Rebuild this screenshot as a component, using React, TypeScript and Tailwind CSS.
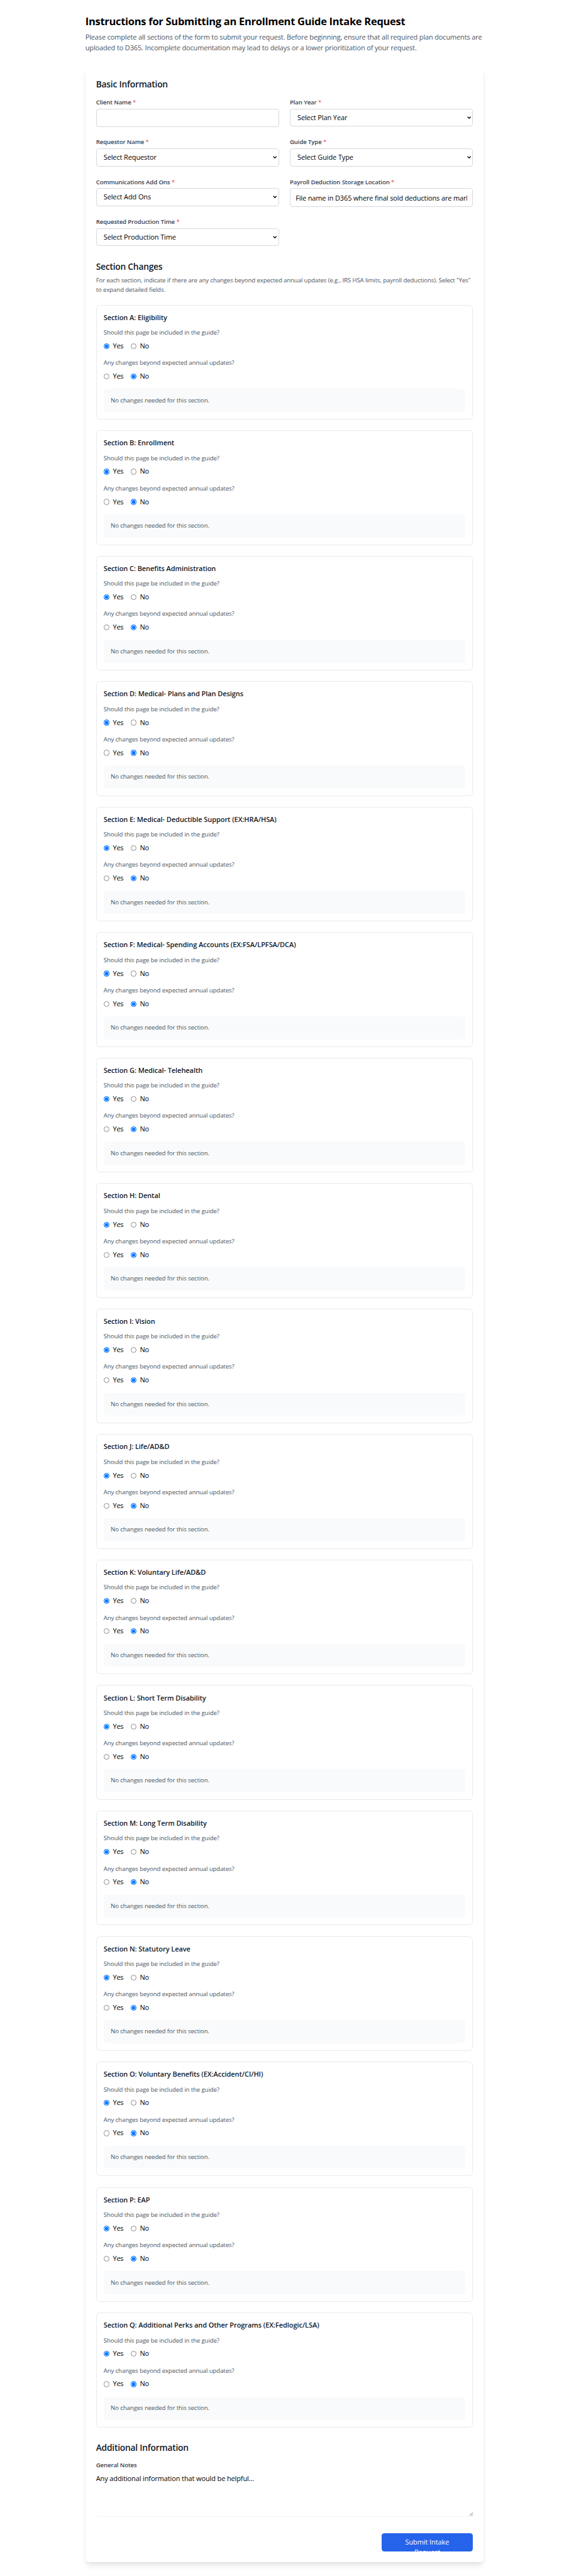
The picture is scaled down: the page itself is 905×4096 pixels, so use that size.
import type { ReactNode } from 'react';

const sections = [
  'Section A: Eligibility',
  'Section B: Enrollment',
  'Section C: Benefits Administration',
  'Section D: Medical- Plans and Plan Designs',
  'Section E: Medical- Deductible Support (EX:HRA/HSA)',
  'Section F: Medical- Spending Accounts (EX:FSA/LPFSA/DCA)',
  'Section G: Medical- Telehealth',
  'Section H: Dental',
  'Section I: Vision',
  'Section J: Life/AD&D',
  'Section K: Voluntary Life/AD&D',
  'Section L: Short Term Disability',
  'Section M: Long Term Disability',
  'Section N: Statutory Leave',
  'Section O: Voluntary Benefits (EX:Accident/CI/HI)',
  'Section P: EAP',
  'Section Q: Additional Perks and Other Programs (EX:Fedlogic/LSA)',
];

function Field({ label, children }: { label: string; children: ReactNode }) {
  return (
    <div className="h-[46.68px]">
      <label className="mb-1 block text-[9.65px] leading-5 font-semibold tracking-[-0.13px] text-[#374151]">
        {label} <span className="font-normal text-[#ef4444]">*</span>
      </label>
      {children}
    </div>
  );
}

function SelectField({ label, option }: { label: string; option: string }) {
  return (
    <Field label={label}>
      <div className="relative">
        <select className="block h-[28.5px] w-full appearance-none rounded-[4.2px] border border-[#d5d8de] bg-white pr-5 pl-[11px] text-[11px] tracking-[-0.12px] text-black">
          <option>{option}</option>
        </select>
        <svg
          className="pointer-events-none absolute top-[12px] right-[3.2px] h-[4.2px] w-[6.4px]"
          viewBox="0 0 9 6"
          fill="none"
          stroke="#000"
          strokeWidth="2"
        >
          <path d="M1 1L4.5 4.5L8 1" />
        </svg>
      </div>
    </Field>
  );
}

function TextField({ label, value }: { label: string; value?: string }) {
  return (
    <Field label={label}>
      <input
        type="text"
        defaultValue={value}
        className="block h-[29.7px] w-full rounded-[4.2px] border border-[#d5d8de] bg-white px-[8.2px] text-[11px] tracking-[-0.145px] text-black"
      />
    </Field>
  );
}

function Choice({ name, label, checked }: { name: string; label: string; checked: boolean }) {
  return (
    <label className="flex h-6 items-center gap-2 text-[11px] leading-6 tracking-[-0.3px] text-black">
      <input
        type="radio"
        name={name}
        defaultChecked={checked}
        className="size-[9.2px] appearance-none rounded-full border border-[#8a8a8a] bg-white checked:border-[#0075ff] checked:bg-[#0075ff] checked:shadow-[inset_0_0_0_0.9px_#fff]"
      />
      {label}
    </label>
  );
}

function Question({ name, text, yes }: { name: string; text: string; yes: boolean }) {
  return (
    <div>
      <p className="mb-2 text-[9.65px] leading-5 tracking-[-0.11px] text-[#4b5563]">{text}</p>
      <div className="flex gap-4">
        <Choice name={name} label="Yes" checked={yes} />
        <Choice name={name} label="No" checked={!yes} />
      </div>
    </div>
  );
}

function SectionCard({ title, index }: { title: string; index: number }) {
  return (
    <section className="rounded-[5.66px] border border-[#e8eaee] bg-white p-[11.02px]">
      <h3 className="mb-3 text-[11px] leading-6 font-semibold tracking-[-0.07px] text-[#111827]">{title}</h3>
      <div className="flex flex-col gap-4">
        <Question name={`include-${index}`} text="Should this page be included in the guide?" yes />
        <Question name={`changes-${index}`} text="Any changes beyond expected annual updates?" yes={false} />
        <div className="rounded-[4.2px] bg-[#f9fafb] p-4 text-[9.65px] leading-5 tracking-[-0.1px] text-[#4b5563]">
          No changes needed for this section.
        </div>
      </div>
    </section>
  );
}

function Heading({ children }: { children: ReactNode }) {
  return <h2 className="text-[13.8px] leading-7 font-semibold tracking-[-0.23px] text-[#111827]">{children}</h2>;
}

export default function App() {
  return (
    <div className="flex min-h-screen flex-col items-center bg-white py-8 font-['Open_Sans','Noto_Sans',sans-serif] [--spacing:2.8292px]">
      <main className="w-[633.5px]">
        <header className="mb-8">
          <h1 className="mb-2 text-[16.5px] leading-8 font-bold tracking-[-0.285px] text-black">
            Instructions for Submitting an Enrollment Guide Intake Request
          </h1>
          <p className="text-[11px] leading-6 tracking-[-0.15px] text-[#4b5563]">
            Please complete all sections of the form to submit your request. Before beginning, ensure that all required plan documents are
            <br />
            uploaded to D365. Incomplete documentation may lead to delays or a lower prioritization of your request.
          </p>
        </header>
        <form className="rounded-[5.66px] bg-white p-6 shadow-[0_7px_10.6px_-2.1px_rgba(0,0,0,0.1),0_2.8px_4.2px_-2.8px_rgba(0,0,0,0.1)]">
          <Heading>Basic Information</Heading>
          <div className="mt-4 grid grid-cols-2 gap-x-6 gap-y-[16.8px]">
            <TextField label="Client Name" />
            <SelectField label="Plan Year" option="Select Plan Year" />
            <SelectField label="Requestor Name" option="Select Requestor" />
            <SelectField label="Guide Type" option="Select Guide Type" />
            <SelectField label="Communications Add Ons" option="Select Add Ons" />
            <TextField
              label="Payroll Deduction Storage Location"
              value="File name in D365 where final sold deductions are marked"
            />
            <SelectField label="Requested Production Time" option="Select Production Time" />
          </div>
          <div className="mt-[21.3px]">
            <Heading>Section Changes</Heading>
            <p className="mt-2 mb-6 text-[9.65px] leading-5 tracking-[-0.11px] text-[#4b5563]">
              For each section, indicate if there are any changes beyond expected annual updates (e.g., IRS HSA limits, payroll deductions). Select "Yes"
              <br />
              to expand detailed fields.
            </p>
            <div className="flex flex-col gap-[17.13px]">
              {sections.map((title, i) => (
                <SectionCard key={title} title={title} index={i} />
              ))}
            </div>
          </div>
          <div className="mt-8">
            <Heading>Additional Information</Heading>
            <label className="mt-4 mb-2 block text-[9.65px] leading-5 font-semibold tracking-[-0.13px] text-[#374151]">
              General Notes
            </label>
            <div className="relative">
              <textarea
                defaultValue="Any additional information that would be helpful..."
                className="block h-24 w-full resize-none rounded-[4.2px] bg-white text-[11px] leading-6 tracking-[-0.125px] text-black shadow-[0_0.7px_1.4px_rgba(0,0,0,0.05)]"
              />
              <svg
                className="pointer-events-none absolute right-[0.7px] bottom-[0.7px] size-[5px]"
                viewBox="0 0 7 7"
                stroke="#444"
                strokeWidth="1"
              >
                <path d="M0 7L7 0M4 7L7 4" />
              </svg>
            </div>
          </div>
          <div className="mt-[26.9px] flex justify-end">
            <button
              type="button"
              className="flex h-[28.8px] w-[145.7px] items-start justify-center overflow-hidden rounded-[4.2px] bg-[#2563eb] px-8 pt-2 text-center text-[11px] leading-6 tracking-[-0.1px] text-white"
            >
              <span>
                Submit Intake
                <br />
                Request
              </span>
            </button>
          </div>
        </form>
      </main>
    </div>
  );
}
